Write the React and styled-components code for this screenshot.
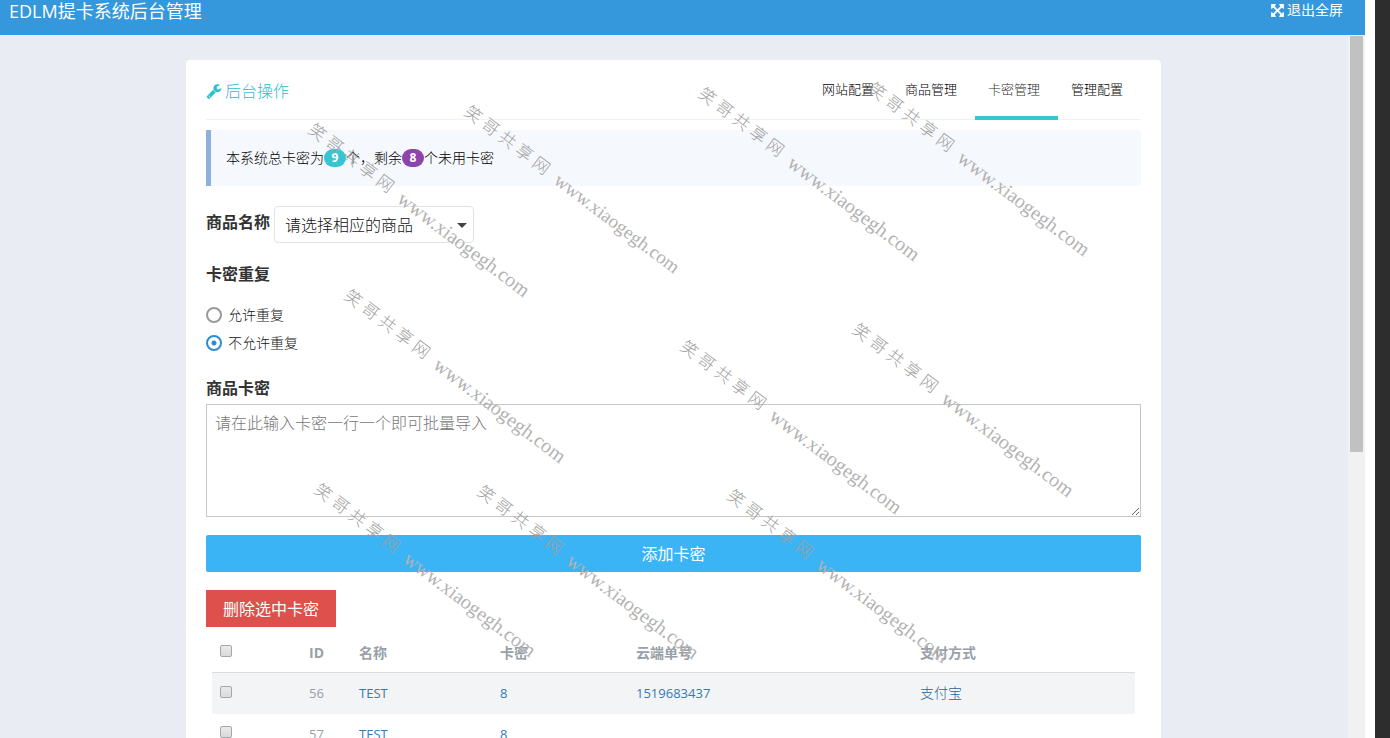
import styled, { createGlobalStyle } from "styled-components";

const GlobalStyle = createGlobalStyle`
  * {
    box-sizing: border-box;
  }

  body {
    margin: 0;
    background: #fff;
    color: #111;
    font-family: "Open Sans", "Noto Sans CJK SC", sans-serif;
    font-size: 14px;
    font-weight: 300;
    line-height: 20px;
  }

  button,
  input,
  select,
  textarea {
    margin: 0;
    font-family: inherit;
  }
`;

const Shell = styled.div`
  position: relative;
  display: flex;
  height: 100vh;
  overflow: hidden;
`;

const Frame = styled.div`
  display: flex;
  flex: 1;
  flex-direction: column;
  min-width: 0;
  margin-right: 10px;
`;

const SideStrip = styled.div`
  width: 15px;
  background: #2d2d2d;
`;

const TopBar = styled.header`
  display: flex;
  justify-content: space-between;
  align-items: flex-start;
  flex-shrink: 0;
  height: 35px;
  padding: 0 22px 0 9px;
  background: #3598dc;
  color: #fff;
`;

const SiteTitle = styled.h1`
  margin: 0;
  font-size: 18px;
  font-weight: 400;
  line-height: 22px;
`;

const ExitLink = styled.a`
  display: flex;
  align-items: center;
  gap: 2px;
  color: #fff;
  font-size: 14px;
  font-weight: 400;
  line-height: 20px;
  text-decoration: none;
`;

const Glyph = styled.svg`
  width: ${({ $size }) => $size}px;
  height: ${({ $size }) => $size}px;
  fill: currentColor;
`;

const Body = styled.div`
  display: flex;
  flex: 1;
  min-height: 0;
`;

const Content = styled.main`
  flex: 1;
  min-width: 0;
  padding: 25px 187px 0 186px;
  overflow: hidden;
  background: #e9ecf3;
`;

const ScrollTrack = styled.div`
  width: 17px;
  padding: 1px 2px;
  background: #f1f1f1;
`;

const ScrollThumb = styled.div`
  height: 416px;
  background: #c1c1c1;
`;

const Card = styled.section`
  padding: 0 20px 20px;
  border-radius: 4px;
  background: #fff;
`;

const CardHeader = styled.div`
  display: flex;
  justify-content: space-between;
  height: 60px;
  border-bottom: 1px solid #eef1f5;
`;

const CardTitle = styled.h2`
  display: flex;
  align-items: center;
  gap: 3px;
  height: 62px;
  margin: 0;
  color: #2bc0ce;
  font-size: 16px;
  font-weight: 300;
`;

const Tabs = styled.nav`
  display: flex;
`;

const Tab = styled.a`
  height: 60px;
  padding: 0 18px 0 13px;
  border-bottom: 4px solid ${({ $active }) => ($active ? "#36c6d3" : "transparent")};
  color: ${({ $active }) => ($active ? "#333" : "#000")};
  font-size: 13px;
  line-height: 58px;
  text-decoration: none;
`;

const Note = styled.p`
  display: flex;
  align-items: center;
  height: 56px;
  margin: 10px 0 20px;
  padding: 0 15px;
  border-left: 5px solid #8fb0df;
  border-radius: 0 4px 4px 0;
  background: #f5f8fd;
  color: #000;
`;

const Badge = styled.span`
  width: 22px;
  height: 18px;
  border-radius: 9px;
  background: ${({ $color }) => $color};
  color: #fff;
  font-size: 12px;
  font-weight: 700;
  line-height: 18px;
  text-align: center;
`;

const Field = styled.div`
  display: flex;
  align-items: flex-start;
  gap: 4px;
`;

const Label = styled.label`
  display: block;
  color: #333;
  font-size: 16px;
  font-weight: 700;
  line-height: 32px;
`;

const SelectBox = styled.div`
  position: relative;
  width: 200px;

  &::after {
    content: "";
    position: absolute;
    top: 17px;
    right: 7px;
    border: 5px solid transparent;
    border-top-color: #444;
    border-bottom: 0;
    pointer-events: none;
  }
`;

const Select = styled.select`
  display: block;
  width: 100%;
  height: 37px;
  padding: 0 10px;
  border: 1px solid #e1e3e6;
  border-radius: 4px;
  appearance: none;
  background: #fff;
  color: #111;
  font-size: 16px;
  font-weight: 300;
`;

const RadioGroup = styled.fieldset`
  margin: 15px 0;
  padding: 0;
  border: 0;
`;

const Legend = styled.legend`
  margin-bottom: 11px;
  padding: 0;
  color: #333;
  font-size: 16px;
  font-weight: 700;
  line-height: 32px;
`;

const RadioLabel = styled.label`
  display: flex;
  align-items: center;
  gap: 6px;
  height: 28px;
`;

const Radio = styled.input`
  width: 16px;
  height: 16px;
  border: 2px solid #999;
  border-radius: 50%;
  appearance: none;

  &:checked {
    border-color: #2d8bd0;
    background: radial-gradient(circle, #2d8bd0 2px, #fff 3px);
  }
`;

const TextArea = styled.textarea`
  display: block;
  width: 100%;
  height: 113px;
  padding: 6px 8px;
  border: 1px solid #c6c6c6;
  font-size: 16px;
  font-weight: 300;
  line-height: 24px;

  &::placeholder {
    color: #777;
  }
`;

const Button = styled.button`
  display: block;
  width: ${({ $block }) => ($block ? "100%" : "auto")};
  height: 37px;
  margin-top: 18px;
  padding: 0 17px 1px;
  border: 0;
  border-radius: ${({ $block }) => ($block ? "2px" : "0")};
  background: ${({ $color }) => $color};
  color: #fff;
  font-size: 16px;
  font-weight: 400;
`;

const TableWrap = styled.div`
  padding: 5px 6px 0;
`;

const Table = styled.table`
  width: 100%;
  border-collapse: collapse;
  table-layout: fixed;
  color: #98a0a8;

  th,
  td {
    padding: 0 8px;
    text-align: left;
  }

  th {
    height: 40px;
    padding-top: 2px;
    border-bottom: 1px solid #dadcdf;
    font-weight: 700;
  }

  tbody tr {
    height: 39px;
  }

  tbody tr:nth-child(odd) {
    height: 42px;
    background: #f3f4f6;
  }
`;

const CellText = styled.span`
  font-size: 13px;
  font-weight: 400;
`;

const CellLink = styled.a`
  color: ${({ $latin }) => ($latin ? "#337ab7" : "#1f64a0")};
  font-size: ${({ $latin }) => ($latin ? "13px" : "14px")};
  font-weight: ${({ $latin }) => ($latin ? 400 : 300)};
  text-decoration: none;
`;

const CheckBox = styled.input`
  display: block;
  width: 12px;
  height: 12px;
  margin-bottom: 3px;
  border: 1px solid #a4a8ad;
  border-radius: 2px;
  appearance: none;
  background: linear-gradient(#e8eaee, #dadada);
`;

const WatermarkLayer = styled.div`
  position: absolute;
  inset: 0;
  overflow: hidden;
  pointer-events: none;
`;

const Watermark = styled.div`
  position: absolute;
  left: ${({ $x }) => $x}px;
  top: ${({ $y }) => $y}px;
  display: flex;
  gap: 11px;
  color: #b2b2b2;
  font-family: "Liberation Serif", "Noto Sans CJK SC", serif;
  font-size: ${({ $size }) => $size}px;
  font-weight: 400;
  line-height: 20px;
  white-space: nowrap;
  transform: rotate(37deg);
  transform-origin: 0 50%;
`;

const WatermarkName = styled.span`
  color: #a0a0a0;
  font-size: 17px;
  font-weight: 300;
`;

const tabs = ["网站配置", "商品管理", "卡密管理", "管理配置"];

const columns = [
  { title: "ID", width: 50 },
  { title: "名称", width: 141 },
  { title: "卡密", width: 136 },
  { title: "云端单号", width: 284 },
  { title: "支付方式" },
];

const rows = [
  { id: 56, name: "TEST", card: "8", order: "1519683437", pay: "支付宝" },
  { id: 57, name: "TEST", card: "8", order: "", pay: "" },
];

const watermarks = [
  { x: 310, y: 118, size: 20 },
  { x: 466, y: 100, size: 19 },
  { x: 700, y: 82, size: 20 },
  { x: 870, y: 77, size: 20 },
  { x: 346, y: 284, size: 20 },
  { x: 682, y: 335, size: 20 },
  { x: 854, y: 318, size: 20 },
  { x: 316, y: 478, size: 20 },
  { x: 479, y: 480, size: 20 },
  { x: 729, y: 484, size: 20 },
];

const WrenchIcon = () => (
  <Glyph $size={16} viewBox="0 0 1792 1792" aria-hidden="true">
    <path d="M448 1472q0-26-19-45t-45-19-45 19-19 45 19 45 45 19 45-19 19-45zm644-420l-682 682q-37 37-90 37-52 0-91-37l-106-108q-38-36-38-90 0-53 38-91l681-681q39 98 114.5 173.5t173.5 114.5zm634-435q0 39-23 106-47 134-164.5 217.5t-258.5 83.5q-185 0-316.5-131.5t-131.5-316.5 131.5-316.5 316.5-131.5q58 0 121.5 16.5t107.5 46.5q16 11 16 28t-16 28l-293 169v224l193 107q5-3 79-48.5t135.5-81 70.5-35.5q15 0 23.5 10t8.5 25z" />
  </Glyph>
);

const ArrowsIcon = () => (
  <Glyph $size={15} viewBox="0 0 1792 1792" aria-hidden="true">
    <path d="M1411 541l-355 355 355 355 144-144q29-31 70-14 39 17 39 59v448q0 26-19 45t-45 19h-448q-42 0-59-40-17-39 14-69l144-144-355-355-355 355 144 144q31 30 14 69-17 40-59 40h-448q-26 0-45-19t-19-45v-448q0-42 40-59 39-17 69 14l144 144 355-355-355-355-144 144q-19 19-45 19-12 0-24-5-40-17-40-59v-448q0-26 19-45t45-19h448q42 0 59 40 17 39-14 69l-144 144 355 355 355-355-144-144q-31-30-14-69 17-40 59-40h448q26 0 45 19t19 45v448q0 42-39 59-13 5-25 5-26 0-45-19z" />
  </Glyph>
);

const CardTable = () => (
  <TableWrap>
    <Table>
      <colgroup>
        <col style={{ width: 89 }} />
        {columns.map(({ title, width }) => (
          <col key={title} style={{ width }} />
        ))}
      </colgroup>
      <thead>
        <tr>
          <th>
            <CheckBox type="checkbox" aria-label="全选" />
          </th>
          {columns.map(({ title }) => (
            <th key={title}>{title}</th>
          ))}
        </tr>
      </thead>
      <tbody>
        {rows.map(({ id, name, card, order, pay }) => (
          <tr key={id}>
            <td>
              <CheckBox type="checkbox" aria-label={`选择 ${id}`} />
            </td>
            <td>
              <CellText>{id}</CellText>
            </td>
            {[name, card, order].map((text, i) => (
              <td key={i}>
                {text && (
                  <CellLink href="#" $latin>
                    {text}
                  </CellLink>
                )}
              </td>
            ))}
            <td>{pay && <CellLink href="#">{pay}</CellLink>}</td>
          </tr>
        ))}
      </tbody>
    </Table>
  </TableWrap>
);

const App = () => {
  return (
    <Shell>
      <GlobalStyle />
      <Frame>
        <TopBar>
          <SiteTitle>EDLM提卡系统后台管理</SiteTitle>
          <ExitLink href="#">
            <ArrowsIcon />
            退出全屏
          </ExitLink>
        </TopBar>
        <Body>
          <Content>
            <Card>
              <CardHeader>
                <CardTitle>
                  <WrenchIcon />
                  后台操作
                </CardTitle>
                <Tabs>
                  {tabs.map((tab) => (
                    <Tab key={tab} href="#" $active={tab === "卡密管理"}>
                      {tab}
                    </Tab>
                  ))}
                </Tabs>
              </CardHeader>
              <Note>
                本系统总卡密为<Badge $color="#36c6d3">9</Badge>个，剩余
                <Badge $color="#8e44ad">8</Badge>个未用卡密
              </Note>
              <Field>
                <Label htmlFor="goods">商品名称</Label>
                <SelectBox>
                  <Select id="goods">
                    <option>请选择相应的商品</option>
                  </Select>
                </SelectBox>
              </Field>
              <RadioGroup>
                <Legend>卡密重复</Legend>
                <RadioLabel>
                  <Radio type="radio" name="repeat" />
                  允许重复
                </RadioLabel>
                <RadioLabel>
                  <Radio type="radio" name="repeat" defaultChecked />
                  不允许重复
                </RadioLabel>
              </RadioGroup>
              <Label htmlFor="cards">商品卡密</Label>
              <TextArea id="cards" placeholder="请在此输入卡密一行一个即可批量导入" />
              <Button type="button" $block $color="#3ab4f4">
                添加卡密
              </Button>
              <Button type="button" $color="#dd504b">
                删除选中卡密
              </Button>
              <CardTable />
            </Card>
          </Content>
          <ScrollTrack>
            <ScrollThumb />
          </ScrollTrack>
        </Body>
      </Frame>
      <SideStrip />
      <WatermarkLayer aria-hidden="true">
        {watermarks.map(({ x, y, size }) => (
          <Watermark key={`${x}-${y}`} $x={x} $y={y} $size={size}>
            <WatermarkName>笑 哥 共 享 网</WatermarkName>
            <span>www.xiaogegh.com</span>
          </Watermark>
        ))}
      </WatermarkLayer>
    </Shell>
  );
};

export default App;
